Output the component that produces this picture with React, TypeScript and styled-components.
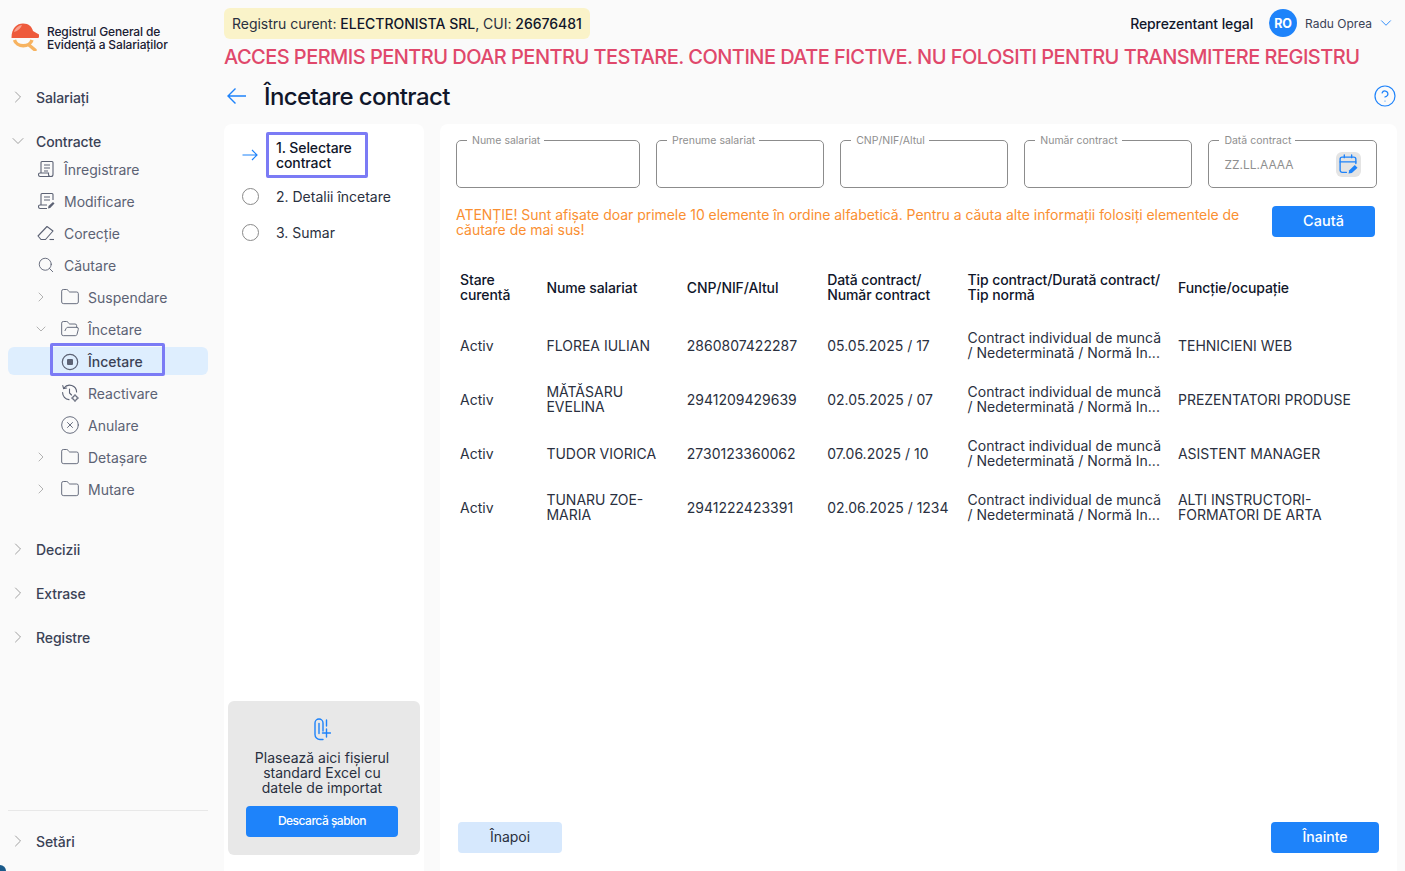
import React from "react";
import styled, { createGlobalStyle } from "styled-components";
import { ChevronDown, ChevronRight, CircleHelp, CircleX, Folder, FolderOpen, Search } from "lucide-react";

const GlobalStyle = createGlobalStyle`
  html, body {
    margin: 0;
    padding: 0;
    height: 100%;
    overflow: hidden;
    background: #fafafa;
  }
  body {
    font-family: "Inter", "Liberation Sans", sans-serif;
    color: #1a2033;
  }
  * { box-sizing: border-box; }
`;

const rows = [
  {
    name: "FLOREA IULIAN",
    cnp: "2860807422287",
    contract: "05.05.2025 / 17",
    job: "TEHNICIENI WEB",
  },
  {
    name: "MĂTĂSARU EVELINA",
    cnp: "2941209429639",
    contract: "02.05.2025 / 07",
    job: "PREZENTATORI PRODUSE",
  },
  {
    name: "TUDOR VIORICA",
    cnp: "2730123360062",
    contract: "07.06.2025 / 10",
    job: "ASISTENT MANAGER",
  },
  {
    name: "TUNARU ZOE-MARIA",
    cnp: "2941222423391",
    contract: "02.06.2025 / 1234",
    job: "ALTI INSTRUCTORI-FORMATORI DE ARTA",
  },
];

const filters = ["Nume salariat", "Prenume salariat", "CNP/NIF/Altul", "Număr contract"];

const Logo = () => (
  <svg width="28" height="28" viewBox="0 0 28 28" fill="none">
    <path d="M0.5 15 C0.5 5 6 0.5 12 0.5 C18 0.5 21 4 22 8 L28 11.5 C28.5 13 28 15 27 15 Z" fill="#ee5a3c" />
    <path d="M3 9 C4 5 8 2 11 2 C10 5 7 8 3 9 Z" fill="#f8a08e" />
    <path d="M3.5 17 A9 7.5 0 0 0 21 17" stroke="#f7b360" strokeWidth="3.4" />
    <path d="M18 22 L24 27" stroke="#f7b360" strokeWidth="3.4" strokeLinecap="round" />
  </svg>
);

const DocIcon = () => (
  <svg width="18" height="18" viewBox="0 0 18 18" fill="none" stroke="currentColor" strokeWidth="1.1">
    <path d="M4 13 V2.5 A1 1 0 0 1 5 1.5 H15 A1 1 0 0 1 16 2.5 V14.5 A2 2 0 0 1 14 16.5 H3 A1.8 1.8 0 0 1 1.5 14.5 A1.5 1.5 0 0 1 3 13 H11.5 V14.5 A2 2 0 0 0 13.5 16.5" />
    <path d="M7 5 H13 M7 8 H13 M7 11 H11" />
  </svg>
);

const DocEditIcon = () => (
  <svg width="18" height="18" viewBox="0 0 18 18" fill="none" stroke="currentColor" strokeWidth="1.1">
    <path d="M4 13 V2.5 A1 1 0 0 1 5 1.5 H15 A1 1 0 0 1 16 2.5 V8" />
    <path d="M10 16.5 H3 A1.8 1.8 0 0 1 1.5 14.5 A1.5 1.5 0 0 1 3 13 H10" />
    <path d="M7 5 H13 M7 8 H13" />
    <path d="M11 16.5 L11.5 14 L16 10 L17.5 11.5 L13.2 16 Z" fill="currentColor" stroke="none" />
  </svg>
);

const EraserIcon = () => (
  <svg width="18" height="18" viewBox="0 0 18 18" fill="none" stroke="currentColor" strokeWidth="1.1" strokeLinejoin="round">
    <path d="M1 12 L10 2.5 L16 7 L8.5 15.5 H4 Z" />
    <path d="M12.5 15.5 H17" />
  </svg>
);

const StopIcon = () => (
  <svg width="20" height="20" viewBox="0 0 20 20" fill="none">
    <circle cx="10" cy="10" r="7.7" stroke="currentColor" strokeWidth="1.2" />
    <rect x="7" y="7" width="6" height="6" rx="1" fill="currentColor" />
  </svg>
);

const HistoryGearIcon = () => (
  <svg width="20" height="20" viewBox="0 0 20 20" fill="none" stroke="currentColor" strokeWidth="1.1" strokeLinecap="round">
    <path d="M4 5 A7 7 0 0 1 16.6 9" />
    <path d="M2.8 2.6 L3.6 5.6 L6.6 5" />
    <path d="M2.6 9.5 A7 7 0 0 0 9 16.6" />
    <path d="M9.5 6 V10 L11.5 12" />
    <circle cx="15" cy="15" r="2.2" />
    <path d="M15 11.5 V12.5 M15 17.5 V18.5 M11.5 15 H12.5 M17.5 15 H18.5" />
  </svg>
);

const ClipPlusIcon = () => (
  <svg width="17" height="23" viewBox="0 0 17 23" fill="none" stroke="#1e83fa" strokeWidth="1.4" strokeLinecap="round">
    <path d="M9 21.5 H6 A5 5 0 0 1 1 16.5 V5 A4 4 0 0 1 9 5 V13" />
    <path d="M5 5.5 V15.5" />
    <path d="M12.5 2 V8" />
    <path d="M12.5 11 V19 M8.5 15 H16.5" />
  </svg>
);

const CalendarEditIcon = () => (
  <svg width="21" height="21" viewBox="0 0 20 20" fill="none" stroke="#1e83fa" strokeWidth="1.3" strokeLinecap="round">
    <path d="M8 17.5 H4 A2 2 0 0 1 2 15.5 V5 A2 2 0 0 1 4 3 H15 A2 2 0 0 1 17 5 V9" />
    <path d="M2 7.5 H17" />
    <path d="M6 1 V3.5 M13 1 V3.5" />
    <path d="M10 18.5 L10.8 15.5 L16 10.5 L18.6 13 L13.2 18 Z" fill="#1e83fa" stroke="none" />
  </svg>
);

const BackArrow = () => (
  <svg width="20" height="20" viewBox="0 0 20 20" fill="none" stroke="#1e83fa" strokeWidth="1.4">
    <path d="M1 10 H19 M8.5 2.5 L1 10 L8.5 17.5" />
  </svg>
);

const StepArrow = () => (
  <svg width="16" height="12" viewBox="0 0 16 12" fill="none" stroke="#1e83fa" strokeWidth="1.2">
    <path d="M0.5 6 H15 M10 1 L15 6 L10 11" />
  </svg>
);

type NavItem = {
  label: string;
  icon: React.ReactNode;
  chevron?: "right" | "down";
  deep?: boolean;
  active?: boolean;
};

const folderIcon = <Folder size={20} strokeWidth={1.1} />;

const contractItems: NavItem[] = [
  { label: "Înregistrare", icon: <DocIcon /> },
  { label: "Modificare", icon: <DocEditIcon /> },
  { label: "Corecție", icon: <EraserIcon /> },
  { label: "Căutare", icon: <Search size={18} strokeWidth={1.2} /> },
  { label: "Suspendare", deep: true, chevron: "right", icon: folderIcon },
  { label: "Încetare", deep: true, chevron: "down", icon: <FolderOpen size={20} strokeWidth={1.1} /> },
  { label: "Încetare", deep: true, active: true, icon: <StopIcon /> },
  { label: "Reactivare", deep: true, icon: <HistoryGearIcon /> },
  { label: "Anulare", deep: true, icon: <CircleX size={20} strokeWidth={1.1} /> },
  { label: "Detașare", deep: true, chevron: "right", icon: folderIcon },
  { label: "Mutare", deep: true, chevron: "right", icon: folderIcon },
];

const TopItem = ({ label, open }: { label: string; open?: boolean }) => (
  <TopRow>
    <ChevronSlot>
      {open ? <ChevronDown size={20} strokeWidth={1} /> : <ChevronRight size={20} strokeWidth={1} />}
    </ChevronSlot>
    {label}
  </TopRow>
);

const App = () => {
  return (
    <>
      <GlobalStyle />
      <Page>
        <Sidebar>
          <LogoBlock>
            <Logo />
            <LogoText>
              Registrul General de
              <br />
              Evidență a Salariaților
            </LogoText>
          </LogoBlock>
          <Section>
            <TopItem label="Salariați" />
          </Section>
          <Section>
            <TopItem label="Contracte" open />
            <SubList>
              {contractItems.map((item, i) =>
                item.deep ? (
                  <DeepRow key={i} $active={item.active}>
                    <SubChevron>
                      {item.chevron === "right" && <ChevronRight size={20} strokeWidth={1} />}
                      {item.chevron === "down" && <ChevronDown size={20} strokeWidth={1} />}
                    </SubChevron>
                    <ItemInner $active={item.active}>
                      <IconSlot>{item.icon}</IconSlot>
                      {item.label}
                    </ItemInner>
                  </DeepRow>
                ) : (
                  <SubRow key={i}>
                    <IconSlot>{item.icon}</IconSlot>
                    {item.label}
                  </SubRow>
                )
              )}
            </SubList>
          </Section>
          <Section>
            <TopItem label="Decizii" />
          </Section>
          <Section>
            <TopItem label="Extrase" />
          </Section>
          <Section>
            <TopItem label="Registre" />
          </Section>
          <SidebarFooter>
            <TopItem label="Setări" />
          </SidebarFooter>
        </Sidebar>

        <Content>
          <TopBar>
            <RegisterBadge>
              Registru curent: <strong>ELECTRONISTA SRL</strong>, CUI: <strong>26676481</strong>
            </RegisterBadge>
            <UserBox>
              <RoleText>Reprezentant legal</RoleText>
              <Avatar>RO</Avatar>
              <UserName>Radu Oprea</UserName>
              <ChevronDown size={18} strokeWidth={1.2} color="#1e83fa" />
            </UserBox>
          </TopBar>
          <AlertLine>
            ACCES PERMIS PENTRU DOAR PENTRU TESTARE. CONTINE DATE FICTIVE. NU FOLOSITI PENTRU TRANSMITERE REGISTRU
          </AlertLine>
          <TitleRow>
            <BackArrow />
            <Title>Încetare contract</Title>
            <HelpSlot>
              <CircleHelp size={24} strokeWidth={1.2} color="#1e83fa" />
            </HelpSlot>
          </TitleRow>

          <Panels>
            <StepsPanel>
              <StepRow>
                <StepMark>
                  <StepArrow />
                </StepMark>
                <ActiveStep>1. Selectare contract</ActiveStep>
              </StepRow>
              <StepRow>
                <StepMark>
                  <Radio />
                </StepMark>
                <StepText>2. Detalii încetare</StepText>
              </StepRow>
              <StepRow>
                <StepMark>
                  <Radio />
                </StepMark>
                <StepText>3. Sumar</StepText>
              </StepRow>
              <DropBox>
                <ClipPlusIcon />
                <DropText>Plasează aici fișierul standard Excel cu datele de importat</DropText>
                <TemplateButton>Descarcă șablon</TemplateButton>
              </DropBox>
            </StepsPanel>

            <MainPanel>
              <FilterGrid>
                {filters.map((f) => (
                  <Field key={f}>
                    <FieldLabel>{f}</FieldLabel>
                  </Field>
                ))}
                <Field>
                  <FieldLabel>Dată contract</FieldLabel>
                  <Placeholder>ZZ.LL.AAAA</Placeholder>
                  <CalendarButton>
                    <CalendarEditIcon />
                  </CalendarButton>
                </Field>
              </FilterGrid>

              <NoticeRow>
                <Notice>
                  ATENȚIE! Sunt afișate doar primele 10 elemente în ordine alfabetică. Pentru a căuta alte informații
                  folosiți elementele de căutare de mai sus!
                </Notice>
                <SearchButton>Caută</SearchButton>
              </NoticeRow>

              <Table>
                <colgroup>
                  <col style={{ width: 86.4 }} />
                  <col style={{ width: 140.4 }} />
                  <col style={{ width: 140.4 }} />
                  <col style={{ width: 140.4 }} />
                  <col style={{ width: 210.4 }} />
                  <col />
                </colgroup>
                <thead>
                  <tr>
                    <th>Stare curentă</th>
                    <th>Nume salariat</th>
                    <th>CNP/NIF/Altul</th>
                    <th>
                      Dată contract/
                      <br />
                      Număr contract
                    </th>
                    <th>
                      Tip contract/Durată contract/
                      <br />
                      Tip normă
                    </th>
                    <th>Funcție/ocupație</th>
                  </tr>
                </thead>
                <tbody>
                  {rows.map((r) => (
                    <tr key={r.cnp}>
                      <td>Activ</td>
                      <td>{r.name}</td>
                      <td>{r.cnp}</td>
                      <td>{r.contract}</td>
                      <td>
                        Contract individual de muncă
                        <br />/ Nedeterminată / Normă In...
                      </td>
                      <td>{r.job}</td>
                    </tr>
                  ))}
                </tbody>
              </Table>

              <FooterRow>
                <BackButton>Înapoi</BackButton>
                <NextButton>Înainte</NextButton>
              </FooterRow>
            </MainPanel>
          </Panels>
        </Content>
        <CornerBlob />
      </Page>
    </>
  );
};

export default App;

const Page = styled.div`
  position: relative;
  display: flex;
  width: 1405px;
  height: 871px;
  overflow: hidden;
  background: #fafafa;
`;

const Sidebar = styled.aside`
  display: flex;
  flex-direction: column;
  flex: 0 0 224px;
  padding: 0 16px 0 8px;
  height: 100%;
`;

const LogoBlock = styled.div`
  display: flex;
  align-items: center;
  gap: 8px;
  height: 85px;
  padding: 0 0 11px 3px;
`;

const LogoText = styled.div`
  margin-top: 2px;
  font-size: 12px;
  line-height: 13px;
  font-weight: 500;
  letter-spacing: -0.15px;
  color: #1a2033;
`;

const Section = styled.div`
  margin-bottom: 20px;
`;

const TopRow = styled.div`
  display: flex;
  align-items: center;
  height: 24px;
  font-size: 14px;
  font-weight: 500;
  letter-spacing: -0.1px;
  color: #3b4256;
`;

const ChevronSlot = styled.span`
  display: flex;
  justify-content: center;
  width: 20px;
  margin-right: 8px;
  color: #8e8e8e;
`;

const SubList = styled.div`
  display: flex;
  flex-direction: column;
  padding-bottom: 12px;
`;

const SubRow = styled.div`
  display: flex;
  align-items: center;
  height: 32px;
  padding-left: 28px;
  font-size: 14px;
  color: #5c6274;
`;

const DeepRow = styled.div<{ $active?: boolean }>`
  position: relative;
  display: flex;
  align-items: center;
  height: 32px;
  padding-left: 25px;
  font-size: 14px;
  color: #5c6274;

  ${(p) =>
    p.$active &&
    `
    &::before {
      content: "";
      position: absolute;
      left: 0;
      right: 0;
      top: 2px;
      bottom: 2px;
      background: #deeefe;
      border-radius: 6px;
    }
  `}
`;

const SubChevron = styled.span`
  display: flex;
  justify-content: center;
  width: 16px;
  margin-right: 11px;
  color: #8e8e8e;
`;

const ItemInner = styled.div<{ $active?: boolean }>`
  position: relative;
  display: flex;
  align-items: center;
  height: 33px;
  margin-top: ${(p) => (p.$active ? "-3px" : "0")};
  margin-left: ${(p) => (p.$active ? "-10px" : "0")};
  padding: ${(p) => (p.$active ? "4px 19px 0 7px" : "0")};
  border: ${(p) => (p.$active ? "3px solid #7b7bf5" : "none")};
  border-radius: 2px;
  font-weight: ${(p) => (p.$active ? 500 : 400)};
  color: ${(p) => (p.$active ? "#3b4256" : "inherit")};
`;

const IconSlot = styled.span`
  display: flex;
  align-items: center;
  justify-content: center;
  width: 20px;
  height: 20px;
  margin-right: 8px;
  color: #5c6274;
`;

const SidebarFooter = styled.div`
  margin-top: auto;
  padding: 18px 0 18px;
  border-top: 1px solid #e8e8e8;
`;

const Content = styled.main`
  display: flex;
  flex-direction: column;
  flex: 1;
  min-width: 0;
  padding-right: 8px;
`;

const TopBar = styled.div`
  display: flex;
  align-items: center;
  justify-content: space-between;
  height: 31px;
  margin-top: 8px;
`;

const RegisterBadge = styled.div`
  height: 31px;
  padding: 0 8px;
  background: #faf3c9;
  border-radius: 6px;
  font-size: 14px;
  line-height: 31px;
  letter-spacing: -0.02px;
  color: #2a3040;

  strong {
    font-weight: 500;
    color: #10162a;
  }
`;

const UserBox = styled.div`
  display: flex;
  align-items: center;
  margin-top: -1px;
  margin-right: 2px;
`;

const RoleText = styled.span`
  margin-right: 16px;
  font-size: 14px;
  font-weight: 500;
  letter-spacing: -0.1px;
  color: #10162a;
`;

const Avatar = styled.span`
  display: flex;
  align-items: center;
  justify-content: center;
  width: 28px;
  height: 28px;
  margin-right: 8px;
  border-radius: 50%;
  background: #1e83fa;
  color: #fff;
  font-size: 12.5px;
  font-weight: 700;
`;

const UserName = styled.span`
  margin-right: 5px;
  font-size: 12px;
  color: #3b4256;
`;

const AlertLine = styled.div`
  margin-top: 6px;
  height: 24px;
  font-size: 20px;
  line-height: 25px;
  font-weight: 500;
  letter-spacing: -0.54px;
  white-space: nowrap;
  color: #e0486b;
`;

const TitleRow = styled.div`
  display: flex;
  align-items: center;
  height: 32px;
  margin-top: 11px;
  padding-left: 3px;
`;

const Title = styled.h1`
  margin: 0 0 0 17px;
  font-size: 24px;
  font-weight: 500;
  letter-spacing: -0.6px;
  color: #10162a;
`;

const HelpSlot = styled.span`
  display: flex;
  margin-left: auto;
`;

const Panels = styled.div`
  display: flex;
  flex: 1;
  gap: 16px;
  margin-top: 12px;
  min-height: 0;
`;

const StepsPanel = styled.section`
  display: flex;
  flex-direction: column;
  flex: 0 0 200px;
  padding: 8px 4px 16px;
  background: #fff;
  border-radius: 8px 8px 0 0;
`;

const StepRow = styled.div`
  display: flex;
  align-items: center;
  min-height: 36px;
`;

const StepMark = styled.span`
  display: flex;
  justify-content: center;
  width: 44px;
`;

const Radio = styled.span`
  width: 17px;
  height: 17px;
  border: 1.5px solid #8a8a8a;
  border-radius: 50%;
`;

const ActiveStep = styled.div`
  width: 102px;
  height: 46px;
  margin-left: -6px;
  padding: 5px 7px;
  border: 3px solid #7b7bf5;
  border-radius: 2px;
  font-size: 14px;
  line-height: 15px;
  font-weight: 500;
  letter-spacing: -0.1px;
  color: #10162a;
`;

const StepText = styled.span`
  margin-left: 4px;
  font-size: 14px;
  color: #2a3040;
`;

const DropBox = styled.div`
  display: flex;
  flex-direction: column;
  align-items: center;
  margin-top: auto;
  height: 154px;
  padding: 17px 22px 0 18px;
  background: #e8e8e8;
  border-radius: 6px;
`;

const DropText = styled.div`
  margin-top: 9px;
  font-size: 14px;
  line-height: 15px;
  text-align: center;
  color: #2a3040;
`;

const BlueButton = styled.button`
  padding: 0 0 2px;
  border: none;
  border-radius: 4px;
  background: #1e83fa;
  color: #fff;
  font-family: inherit;
  cursor: pointer;
`;

const TemplateButton = styled(BlueButton)`
  width: 152px;
  height: 31px;
  margin-top: 11px;
  font-size: 12px;
  font-weight: 500;
  letter-spacing: -0.5px;
`;

const MainPanel = styled.section`
  display: flex;
  flex-direction: column;
  flex: 1;
  min-width: 0;
  padding: 16px 18px 18px 16px;
  background: #fff;
  border-radius: 8px 8px 0 0;
`;

const FilterGrid = styled.div`
  display: grid;
  grid-template-columns: 184px 168px 168px 168px 168.7px;
  column-gap: 16.1px;
`;

const Field = styled.div`
  position: relative;
  display: flex;
  align-items: center;
  justify-content: space-between;
  height: 48px;
  padding: 1px 15px 0;
  border: 1px solid #8c8c8c;
  border-radius: 5px;
`;

const FieldLabel = styled.span`
  position: absolute;
  top: -6px;
  left: 10px;
  padding: 0 4px 0 5px;
  background: #fff;
  font-size: 10.5px;
  line-height: 12px;
  color: #8f8f8f;
`;

const Placeholder = styled.span`
  font-size: 12px;
  color: #8f8f8f;
`;

const CalendarButton = styled.span`
  display: flex;
  align-items: center;
  justify-content: center;
  width: 25px;
  height: 25px;
  background: #e4e4e4;
  border-radius: 6px;
`;

const NoticeRow = styled.div`
  display: flex;
  align-items: flex-start;
  justify-content: space-between;
  margin-top: 18px;
  padding-right: 4px;
`;

const Notice = styled.p`
  width: 800px;
  margin: 1px 0 0;
  font-size: 14px;
  line-height: 15px;
  letter-spacing: -0.035px;
  color: #fa8f32;
`;

const SearchButton = styled(BlueButton)`
  width: 103px;
  height: 31px;
  font-size: 14.5px;
  font-weight: 500;
`;

const Table = styled.table`
  width: 921px;
  margin-top: 19px;
  border-collapse: collapse;
  table-layout: fixed;
  font-size: 14px;
  line-height: 15px;
  color: #2a3040;

  th {
    height: 62px;
    padding: 0 12px 0 4px;
    text-align: left;
    font-weight: 500;
    letter-spacing: -0.1px;
    color: #10162a;
  }
  th:nth-child(5) {
    padding-right: 0;
    white-space: nowrap;
  }
  td {
    height: 54px;
    padding: 0 12px 0 4px;
  }
  td:nth-child(5) {
    padding-right: 0;
    white-space: nowrap;
  }
`;

const FooterRow = styled.div`
  display: flex;
  align-items: center;
  justify-content: space-between;
  margin-top: auto;
  padding-left: 2px;
`;

const BackButton = styled.button`
  width: 104px;
  height: 31px;
  padding: 0 0 2px;
  border: none;
  border-radius: 4px;
  background: #d6e8fd;
  color: #2a3040;
  font-family: inherit;
  font-size: 14px;
`;

const NextButton = styled(BlueButton)`
  width: 108px;
  height: 31px;
  font-size: 14px;
  font-weight: 500;
`;

const CornerBlob = styled.span`
  position: absolute;
  left: -6px;
  bottom: -6px;
  width: 12px;
  height: 12px;
  border-radius: 50%;
  background: #1a5a8a;
`;
